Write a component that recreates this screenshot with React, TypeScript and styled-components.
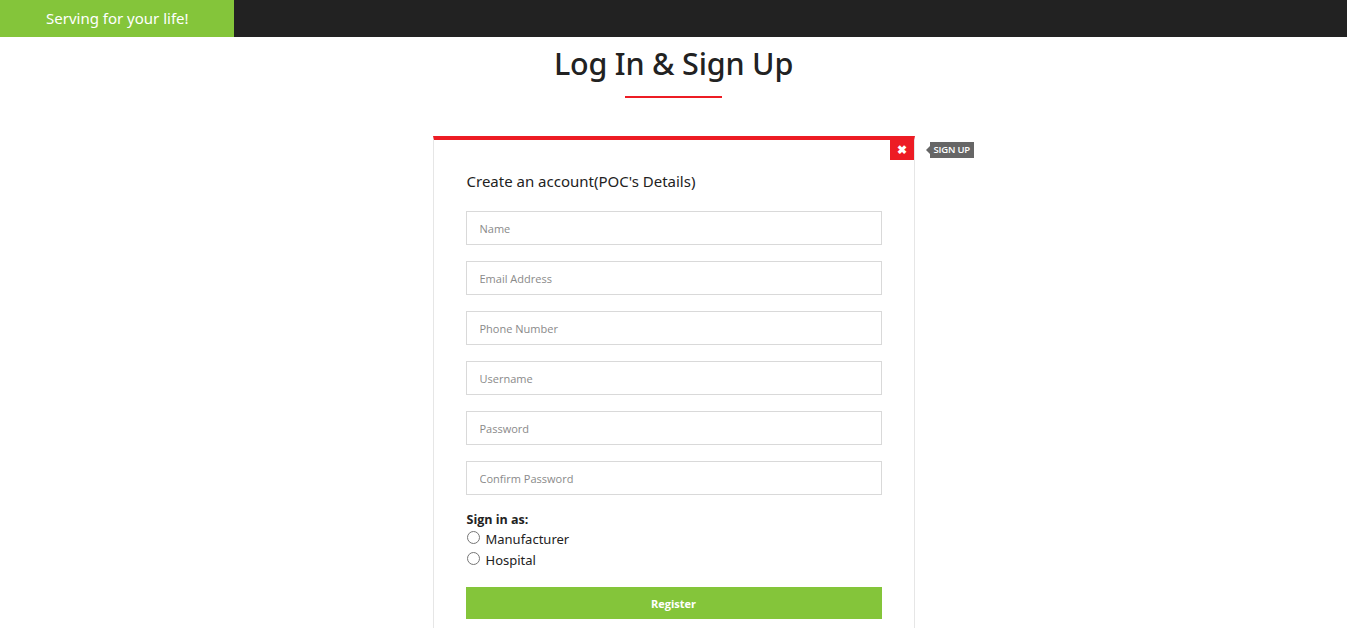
import React from "react";
import styled, { createGlobalStyle } from "styled-components";

const Global = createGlobalStyle`
  html, body { margin: 0; padding: 0; background: #fff; }
  body { font-family: "Open Sans", "Liberation Sans", sans-serif; color: #222; }
  * { box-sizing: border-box; }
`;

const TopBar = styled.header`
  height: 37px;
  background: #222222;
  display: flex;
`;

const Brand = styled.div`
  width: 234px;
  background: #84c53a;
  color: #fff;
  font-family: "Noto Sans", sans-serif;
  font-size: 15px;
  display: flex;
  align-items: center;
  padding-left: 46px;
  padding-bottom: 1px;
`;

const TitleBlock = styled.section`
  display: flex;
  flex-direction: column;
  align-items: center;
  padding-top: 6px;
`;

const Title = styled.h1`
  margin: 0;
  font-family: "Noto Sans", sans-serif;
  font-weight: 500;
  font-size: 30.5px;
  line-height: 40px;
  color: #222;
  letter-spacing: -0.2px;
`;

const Underline = styled.div`
  width: 97px;
  height: 2px;
  background: #ed1c24;
  margin-top: 13px;
`;

const Card = styled.div`
  position: relative;
  width: 482px;
  margin: 38px auto 0;
  border-top: 4px solid #ed1c24;
  border-left: 1px solid #e6e6e6;
  border-right: 1px solid #e6e6e6;
  padding: 31px 32px 12px;
`;

const CloseButton = styled.button`
  position: absolute;
  top: 0;
  right: 0;
  width: 24px;
  height: 20px;
  border: none;
  padding: 0;
  background: #ed1c24;
  color: #fff;
  font-size: 12px;
  font-weight: 700;
  display: flex;
  align-items: center;
  justify-content: center;
  cursor: pointer;
`;

const Tip = styled.div`
  position: absolute;
  top: 2px;
  left: calc(100% + 16px);
  background: #666;
  color: #fff;
  font-family: "Open Sans", sans-serif;
  font-size: 9.5px;
  font-weight: 600;
  letter-spacing: -0.2px;
  height: 16px;
  line-height: 16px;
  padding: 0 4px 0 4px;
  white-space: nowrap;
  &::before {
    content: "";
    position: absolute;
    left: -4px;
    top: 4px;
    border-top: 4px solid transparent;
    border-bottom: 4px solid transparent;
    border-right: 4px solid #666;
  }
`;

const Heading = styled.h3`
  margin: 0 0 20px;
  font-family: "Noto Sans", sans-serif;
  font-weight: 400;
  font-size: 15px;
  line-height: 20px;
  color: #222;
  padding-left: 1px;
`;

const Field = styled.input`
  display: block;
  width: 416px;
  height: 34px;
  margin: 0 0 16px;
  border: 1px solid #d9d9d9;
  padding: 0 13px;
  font-family: "Open Sans", sans-serif;
  font-size: 11px;
  color: #333;
  outline: none;
  &::placeholder { color: #8a8a8a; }
`;

const RoleLabel = styled.div`
  font-family: "Open Sans", sans-serif;
  font-weight: 700;
  font-size: 12.5px;
  color: #222;
  margin-top: 11px;
  line-height: 17px;
  padding-left: 1px;
`;

const RadioRow = styled.label`
  display: flex;
  align-items: center;
  gap: 6px;
  height: 21px;
  font-family: "Noto Sans", sans-serif;
  font-size: 13px;
  color: #222;
`;

const Radio = styled.input`
  width: 13px;
  height: 13px;
  margin: 0 0 3px 1px;
`;

const Register = styled.button`
  display: block;
  width: 416px;
  height: 32px;
  margin-top: 17px;
  border: none;
  background: #84c53a;
  color: #fff;
  font-family: "Open Sans", sans-serif;
  font-weight: 700;
  font-size: 11px;
  cursor: pointer;
`;

export default function App() {
  const fields = ["Name", "Email Address", "Phone Number", "Username", "Password", "Confirm Password"];
  return (
    <>
      <Global />
      <TopBar>
        <Brand>Serving for your life!</Brand>
      </TopBar>
      <TitleBlock>
        <Title>Log In &amp; Sign Up</Title>
        <Underline />
      </TitleBlock>
      <Card>
        <CloseButton aria-label="close">✖</CloseButton>
        <Tip>SIGN UP</Tip>
        <Heading>Create an account(POC's Details)</Heading>
        {fields.map((f) => (
          <Field key={f} placeholder={f} type={f.includes("Password") ? "password" : "text"} />
        ))}
        <RoleLabel>Sign in as:</RoleLabel>
        <RadioRow>
          <Radio type="radio" name="role" />
          Manufacturer
        </RadioRow>
        <RadioRow>
          <Radio type="radio" name="role" />
          Hospital
        </RadioRow>
        <Register>Register</Register>
      </Card>
    </>
  );
}
